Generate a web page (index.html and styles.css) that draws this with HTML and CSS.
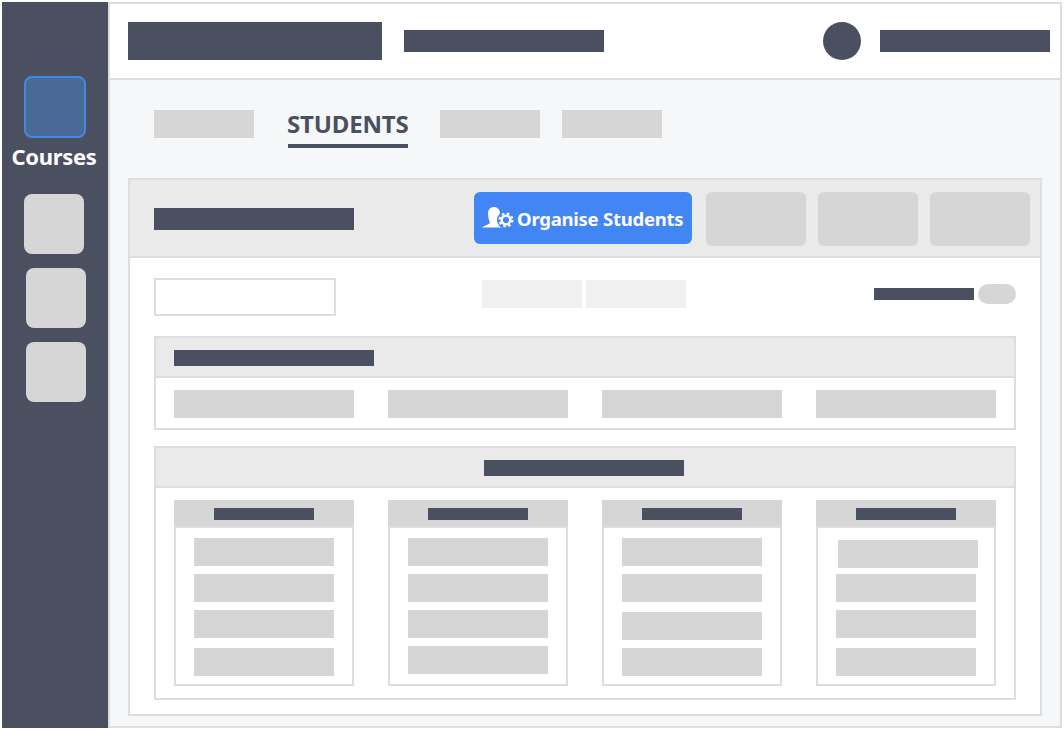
FILE: index.html
```html
<!DOCTYPE html>
<html lang="en">
<head>
    <meta charset="UTF-8">
    <meta name="viewport" content="width=device-width, initial-scale=1.0">
    <title>Students</title>
    <link rel="stylesheet" href="styles.css">
</head>
<body>

    <div class="app">
        <!-- Sidebar -->
        <nav class="sidebar">
            <div class="side-icon side-icon-active"></div>
            <div class="side-label">Courses</div>
            <div class="side-icon side-icon-first"></div>
            <div class="side-icon side-icon-shift"></div>
            <div class="side-icon side-icon-shift"></div>
        </nav>

        <div class="main">
            <!-- Top bar -->
            <header class="topbar">
                <div class="bar logo-bar"></div>
                <div class="bar nav-bar"></div>
                <div class="avatar"></div>
                <div class="bar user-bar"></div>
            </header>

            <div class="content">
                <!-- Tabs -->
                <div class="tabs">
                    <div class="block tab-block"></div>
                    <div class="tab-active">STUDENTS</div>
                    <div class="block tab-block tab-next"></div>
                    <div class="block tab-block tab-last"></div>
                </div>

                <div class="panel">
                    <div class="panel-head">
                        <div class="bar panel-title"></div>
                        <button class="organise">
                            <svg class="organise-icon" width="34" height="24" viewBox="0 0 34 24">
                                <path fill="#fff" d="M0 21.500C2 19.500 6 19 8 17C7 14.500 6 11.500 6 7.500C6 3.500 8.500 1 12 1C15.500 1 18 3.500 18 7.500C18 11 18 14 18 16C20 18 24 19 27 21.500Z"/>
                                <circle cx="24" cy="14" r="9" fill="#4285f4"/>
                                <circle cx="24" cy="14" r="4.300" fill="none" stroke="#fff" stroke-width="2.400"/>
                                <circle cx="24" cy="14" r="6.400" fill="none" stroke="#fff" stroke-width="2.200" stroke-dasharray="2.500 2.530"/>
                            </svg>
                            <span class="organise-text">Organise Students</span>
                        </button>
                        <div class="block head-btn head-btn-first"></div>
                        <div class="block head-btn"></div>
                        <div class="block head-btn"></div>
                    </div>

                    <div class="panel-body">
                        <div class="toolbar">
                            <div class="search"></div>
                            <div class="seg seg-first"></div>
                            <div class="seg"></div>
                            <div class="bar toggle-label"></div>
                            <div class="toggle"></div>
                        </div>

                        <section class="section">
                            <div class="section-head">
                                <div class="bar section-title"></div>
                            </div>
                            <div class="section-row">
                                <div class="block wide-block"></div>
                                <div class="block wide-block"></div>
                                <div class="block wide-block"></div>
                                <div class="block wide-block"></div>
                            </div>
                        </section>

                        <section class="section section-columns">
                            <div class="section-head section-head-mid">
                                <div class="bar section-title"></div>
                            </div>
                            <div class="section-row">
                                <div class="col">
                                    <div class="col-head"><div class="bar col-title"></div></div>
                                    <div class="block col-row"></div>
                                    <div class="block col-row"></div>
                                    <div class="block col-row"></div>
                                    <div class="block col-row col-row-loose"></div>
                                </div>
                                <div class="col">
                                    <div class="col-head"><div class="bar col-title"></div></div>
                                    <div class="block col-row"></div>
                                    <div class="block col-row"></div>
                                    <div class="block col-row"></div>
                                    <div class="block col-row"></div>
                                </div>
                                <div class="col">
                                    <div class="col-head"><div class="bar col-title"></div></div>
                                    <div class="block col-row"></div>
                                    <div class="block col-row"></div>
                                    <div class="block col-row col-row-loose"></div>
                                    <div class="block col-row"></div>
                                </div>
                                <div class="col">
                                    <div class="col-head"><div class="bar col-title"></div></div>
                                    <div class="block col-row col-row-off"></div>
                                    <div class="block col-row col-row-tight"></div>
                                    <div class="block col-row"></div>
                                    <div class="block col-row col-row-loose"></div>
                                </div>
                            </div>
                        </section>
                    </div>
                </div>
            </div>
        </div>
    </div>

</body>
</html>
```

FILE: styles.css
```css
/* Global Styles */
body {
    margin: 0;
    background-color: #fff;
    font-family: "Noto Sans", Arial, sans-serif;
}

.app {
    display: flex;
    width: 1060px;
    height: 726px;
    margin: 2px;
}

/* Placeholders */
.bar {
    background-color: #4b5060;
}

.block {
    background-color: #d6d6d6;
}

/* Sidebar */
.sidebar {
    width: 106px;
    flex-shrink: 0;
    box-sizing: border-box;
    padding-top: 74px;
    background-color: #4b5060;
}

.side-icon {
    width: 60px;
    height: 60px;
    margin-left: 24px;
    border-radius: 8px;
    background-color: #d6d6d6;
}

.side-icon-active {
    width: 62px;
    height: 62px;
    margin-left: 22px;
    box-sizing: border-box;
    border: 2px solid #4488e4;
    background-color: #4a6a96;
}

.side-icon-first {
    margin-left: 22px;
    margin-top: 20px;
}

.side-icon-shift {
    margin-top: 14px;
}

.side-label {
    height: 34px;
    margin-top: 2px;
    padding-right: 2px;
    color: #fff;
    font-size: 22px;
    font-weight: 700;
    letter-spacing: -0.3px;
    line-height: 32px;
    text-align: center;
}

/* Main area */
.main {
    flex: 1;
    box-sizing: border-box;
    border: 2px solid #dedede;
    background-color: #f6f7f9;
}

.topbar {
    display: flex;
    align-items: center;
    height: 74px;
    padding: 0 10px 0 18px;
    border-bottom: 2px solid #dedede;
    background-color: #fff;
}

.logo-bar {
    width: 254px;
    height: 38px;
}

.nav-bar {
    width: 200px;
    height: 22px;
    margin-left: 22px;
}

.avatar {
    width: 38px;
    height: 38px;
    margin-left: auto;
    border-radius: 50%;
    background-color: #4b5060;
}

.user-bar {
    width: 170px;
    height: 22px;
    margin-left: 19px;
}

.content {
    padding: 30px 0 0 18px;
}

/* Tabs */
.tabs {
    display: flex;
    align-items: flex-start;
    height: 68px;
    padding-left: 26px;
}

.tab-block {
    width: 100px;
    height: 28px;
}

.tab-active {
    width: 120px;
    height: 34px;
    margin-left: 34px;
    border-bottom: 4px solid #4b5060;
    color: #4b5060;
    font-size: 24px;
    font-weight: 700;
    letter-spacing: -0.15px;
    line-height: 28px;
    text-indent: -1px;
    white-space: nowrap;
}

.tab-next {
    margin-left: 32px;
}

.tab-last {
    margin-left: 22px;
}

/* Panel */
.panel {
    width: 914px;
    height: 538px;
    box-sizing: border-box;
    border: 2px solid #dedede;
    background-color: #fff;
}

.panel-head {
    display: flex;
    align-items: flex-start;
    height: 76px;
    padding-left: 24px;
    border-bottom: 2px solid #dedede;
    background-color: #eaeaea;
}

.panel-title {
    width: 200px;
    height: 22px;
    margin-top: 28px;
}

.organise {
    display: flex;
    align-items: center;
    width: 218px;
    height: 52px;
    margin: 12px 0 0 120px;
    padding: 0 0 0 8px;
    border: none;
    border-radius: 6px;
    background-color: #4285f4;
    color: #fff;
    font-family: inherit;
    font-size: 18.5px;
    font-weight: 700;
    letter-spacing: -0.25px;
    white-space: nowrap;
}

.organise-icon {
    flex-shrink: 0;
    margin-right: 1px;
}

.organise-text {
    margin-top: 1px;
}

.head-btn {
    width: 100px;
    height: 54px;
    margin: 12px 0 0 12px;
    border-radius: 6px;
}

.head-btn-first {
    margin-left: 14px;
}

.panel-body {
    padding: 20px 24px 0;
}

/* Toolbar */
.toolbar {
    display: flex;
    align-items: flex-start;
    height: 38px;
}

.search {
    width: 182px;
    height: 38px;
    box-sizing: border-box;
    border: 2px solid #dedede;
}

.seg {
    width: 100px;
    height: 28px;
    margin: 2px 0 0 4px;
    background-color: #f0f0f0;
}

.seg-first {
    margin-left: 146px;
}

.toggle-label {
    width: 100px;
    height: 12px;
    margin: 10px 0 0 188px;
}

.toggle {
    width: 38px;
    height: 20px;
    margin: 6px 0 0 4px;
    border-radius: 10px;
    background-color: #d6d6d6;
}

/* Sections */
.section {
    width: 862px;
    box-sizing: border-box;
    margin-top: 20px;
    border: 2px solid #dedede;
}

.section-columns {
    margin-top: 16px;
}

.section-head {
    height: 38px;
    box-sizing: content-box;
    padding-left: 18px;
    border-bottom: 2px solid #dedede;
    background-color: #eaeaea;
    overflow: hidden;
}

.section-head-mid {
    padding-left: 328px;
}

.section-title {
    width: 200px;
    height: 16px;
    margin-top: 12px;
}

.section-row {
    display: flex;
    gap: 34px;
    padding: 12px 18px 10px;
}

.section-columns .section-row {
    padding-bottom: 12px;
}

.wide-block {
    width: 180px;
    height: 28px;
}

/* Columns */
.col {
    width: 180px;
    height: 186px;
    box-sizing: border-box;
    border: 2px solid #dedede;
    border-top: none;
}

.col-head {
    height: 26px;
    margin: 0 -2px;
    overflow: hidden;
    border-bottom: 2px solid #dedede;
    background-color: #d6d6d6;
}

.col-title {
    width: 100px;
    height: 12px;
    margin: 8px 0 0 40px;
}

.col-row {
    width: 140px;
    height: 28px;
    margin: 8px 0 0 18px;
}

.col-head + .col-row {
    margin-top: 10px;
}

.col-row-loose {
    margin-top: 10px;
}

.col-head + .col-row-off {
    margin: 12px 0 0 20px;
}

.col-row-tight {
    margin-top: 6px;
}
```
